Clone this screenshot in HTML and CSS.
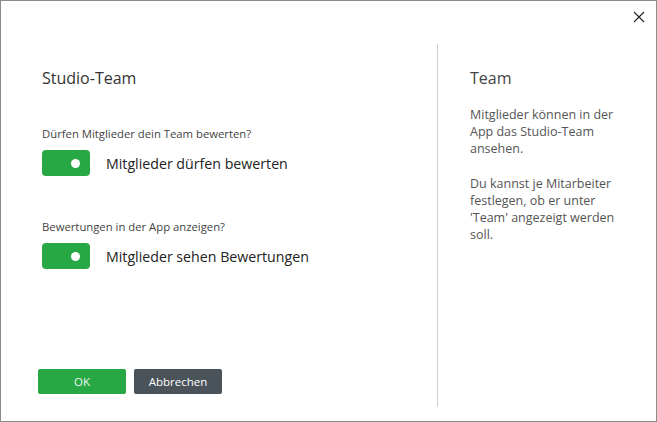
FILE: index.html
```html
<!DOCTYPE html>
<html lang="de">
<head>
  <meta charset="UTF-8">
  <meta name="viewport" content="width=device-width, initial-scale=1.0">
  <title>Studio-Team</title>
  <link rel="stylesheet" href="styles.css">
</head>
<body>
  <div class="dialog">
    <button class="close" aria-label="Schließen">
      <svg width="12" height="12" viewBox="0 0 12 12">
        <path d="M1 1 L11 11 M11 1 L1 11" stroke="#222" stroke-width="1.1" fill="none"/>
      </svg>
    </button>

    <div class="main">
      <div class="settings">
        <h2 class="title">Studio-Team</h2>

        <div class="group">
          <p class="question">Dürfen Mitglieder dein Team bewerten?</p>
          <label class="switch-row">
            <span class="switch on"><span class="knob"></span></span>
            <span class="switch-label">Mitglieder dürfen bewerten</span>
          </label>
        </div>

        <div class="group">
          <p class="question">Bewertungen in der App anzeigen?</p>
          <label class="switch-row">
            <span class="switch on"><span class="knob"></span></span>
            <span class="switch-label">Mitglieder sehen Bewertungen</span>
          </label>
        </div>

        <div class="actions">
          <button class="button">OK</button>
          <button class="button secondary">Abbrechen</button>
        </div>
      </div>

      <aside class="info">
        <h3 class="info-title">Team</h3>
        <p>Mitglieder können in der App das Studio-Team ansehen.</p>
        <p>Du kannst je Mitarbeiter festlegen, ob er unter 'Team' angezeigt werden soll.</p>
      </aside>
    </div>
  </div>
</body>
</html>
```

FILE: styles.css
```css
* {
  margin: 0;
  padding: 0;
  box-sizing: border-box;
  font-family: 'Open Sans', 'Noto Sans', sans-serif;
}

body {
  background: #fff;
}

.dialog {
  position: relative;
  width: 657px;
  height: 422px;
  border: 1px solid #8c8c8c;
  background: #fff;
}

.close {
  position: absolute;
  top: 9px;
  right: 10px;
  width: 14px;
  height: 14px;
  border: none;
  background: none;
  display: flex;
  align-items: center;
  justify-content: center;
  cursor: pointer;
}

.main {
  display: flex;
  height: 100%;
  padding: 43px 0 14px;
}

.settings {
  width: 437px;
  border-right: 1px solid #cfcfcf;
  padding-left: 41px;
  display: flex;
  flex-direction: column;
}

.title {
  font-size: 16px;
  font-weight: normal;
  color: #333;
  line-height: 22px;
  margin-top: 23px;
}

.group {
  margin-top: 37px;
}

.group + .group {
  margin-top: 43px;
}

.question {
  font-size: 11.3px;
  color: #444;
  line-height: 16px;
}

.switch-row {
  display: flex;
  align-items: center;
  gap: 16px;
  margin-top: 8px;
  cursor: pointer;
}

.switch {
  width: 48px;
  height: 26px;
  border-radius: 4px;
  background: #c4c4c4;
  display: flex;
  align-items: center;
  padding: 0 10px;
}

.switch.on {
  background: #28a745;
  justify-content: flex-end;
}

.knob {
  width: 9px;
  height: 9px;
  border-radius: 50%;
  background: #fff;
}

.switch-label {
  font-size: 14.2px;
  color: #222;
}

.actions {
  margin-top: auto;
  margin-bottom: 13px;
  margin-left: -4px;
  display: flex;
  gap: 8px;
}

.button {
  width: 88px;
  height: 25px;
  border: none;
  border-radius: 2px;
  background: #28a745;
  color: #eaf6ea;
  font-size: 11.5px;
  cursor: pointer;
}

.button.secondary {
  background: #4b535a;
  color: #fff;
}

.info {
  flex: 1;
  padding-left: 32px;
  padding-right: 20px;
}

.info-title {
  font-size: 16px;
  font-weight: normal;
  color: #444;
  line-height: 22px;
  margin-top: 23px;
  margin-bottom: 17px;
}

.info p {
  font-size: 12.5px;
  line-height: 17px;
  color: #555;
  margin-bottom: 18px;
}
```
